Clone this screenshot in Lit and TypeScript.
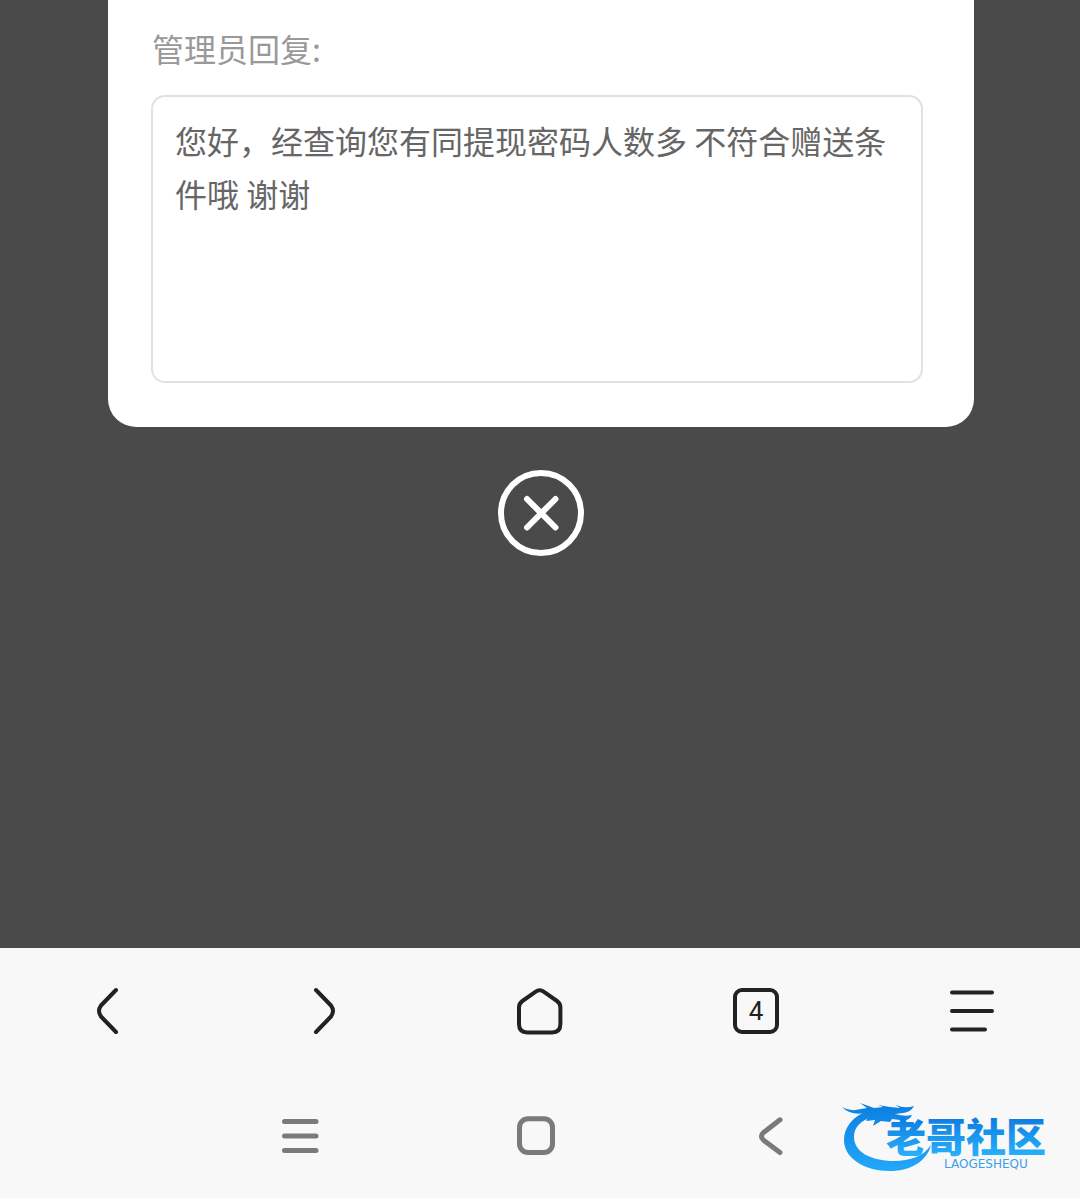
import { LitElement, html, css, svg } from "lit";
import { customElement, property } from "lit/decorators.js";

const icons = {
  back: svg`<path d="M32 3 17 18.5Q13 24 17 29.5L32 45" />`,
  forward: svg`<path d="M16 3 31 18.5Q35 24 31 29.5L16 45" />`,
  home: svg`<path d="M19.4 4.8Q23.7 1.6 28 4.8L41 14Q44.4 16.4 44.4 20.5V37Q44.4 45.4 36 45.4H11.4Q3 45.4 3 37V20.5Q3 16.4 6.4 14Z" />`,
  menu: svg`<path d="M4 5.5H44M4 24H44M4 42.5H37" />`,
  recents: svg`<path d="M8.5 9.5H40M8.5 24H40M8.5 38.5H40" />`,
  overview: svg`<rect x="7.5" y="6.8" width="33" height="33.6" rx="8.5" />`,
  systemBack: svg`<path d="M32 7.8 15.6 20.4Q11.2 24.2 15.6 28.2L32 40.6" />`,
};

@customElement("site-logo")
class SiteLogo extends LitElement {
  static styles = css`
    :host {
      display: block;
    }
    svg {
      display: block;
    }
    .name {
      font: 900 40px "Noto Sans CJK SC", sans-serif;
    }
    .latin {
      font: 12px "DejaVu Sans", sans-serif;
    }
  `;

  render() {
    return html`
      <svg width="228" height="80" viewBox="0 0 228 80" role="img" aria-label="老哥社区 LAOGESHEQU">
        <defs>
          <linearGradient id="ring" gradientUnits="userSpaceOnUse" x1="0" y1="8" x2="0" y2="76">
            <stop offset="0" stop-color="#0b7fe0" />
            <stop offset="1" stop-color="#22a9fb" />
          </linearGradient>
          <linearGradient id="ink" gradientUnits="userSpaceOnUse" x1="0" y1="24" x2="0" y2="60">
            <stop offset="0" stop-color="#0f80e2" />
            <stop offset="1" stop-color="#27b1fc" />
          </linearGradient>
        </defs>
        <path
          fill="url(#ring)"
          d="M29 14C13 20 4 31 4 44C4 62 24 75 50 75C71 75 87 65 91 49C84 60 70 65 54 65C31 65 14 56 14 41C14 31 21 24 33 21Z"
        />
        <path
          fill="url(#ring)"
          d="M2 11Q10 16 21 13L27 12L20 7L34 12L43 11L38 9L50 11L60 12L56 9Q65 13 74 10Q71 16 63 17L55 18Q65 21 72 19Q69 26 60 24L52 23L50 26L41 25L33 30L35 24L26 25L29 20L20 21L25 17Q11 20 2 11Z"
        />
        <text class="name" x="46" y="56" fill="url(#ink)">老哥社区</text>
        <text class="latin" x="104" y="72" fill="#3a9eeb">LAOGESHEQU</text>
      </svg>
    `;
  }
}

@customElement("line-icon")
class LineIcon extends LitElement {
  @property() name: keyof typeof icons = "back";

  static styles = css`
    :host {
      display: block;
    }
    svg {
      display: block;
      width: 48px;
      height: 48px;
      fill: none;
      stroke: currentColor;
      stroke-width: var(--icon-stroke, 4);
      stroke-linecap: round;
      stroke-linejoin: round;
    }
  `;

  render() {
    return html`<svg viewBox="0 0 48 48" aria-hidden="true">${icons[this.name]}</svg>`;
  }
}

@customElement("app-root")
class AppRoot extends LitElement {
  @property() reply = "您好，经查询您有同提现密码人数多 不符合赠送条件哦 谢谢";
  @property({ type: Number }) tabs = 4;

  static styles = css`
    :host {
      display: flex;
      flex-direction: column;
      min-height: 100vh;
      background: #4a4a4a;
      font-family: "Noto Sans CJK SC", sans-serif;
    }
    * {
      box-sizing: border-box;
    }
    button {
      display: grid;
      place-items: center;
      padding: 0;
      border: 0;
      background: none;
      color: inherit;
      font: inherit;
      cursor: pointer;
    }
    .backdrop {
      flex: 1;
      display: flex;
      flex-direction: column;
      align-items: center;
      gap: 43px;
      padding: 0 106px 0 108px;
    }
    .card {
      display: flex;
      flex-direction: column;
      gap: 29px;
      width: 100%;
      padding: 30px 51px 44px 43px;
      border-radius: 0 0 28px 28px;
      background: #fff;
    }
    .label {
      padding-left: 1px;
      color: #999;
      font-size: 32px;
      line-height: 36px;
    }
    .reply {
      display: block;
      width: 100%;
      height: 288px;
      margin: 0;
      padding: 17px 22px;
      border: 2px solid #e1e1e1;
      border-radius: 14px;
      outline: 0;
      resize: none;
      overflow: hidden;
      background: #fff;
      color: #666;
      font-family: inherit;
      font-size: 32px;
      line-height: 53px;
    }
    .close svg {
      display: block;
      width: 86px;
      height: 86px;
      fill: none;
      stroke: #fff;
      stroke-width: 6;
      stroke-linecap: round;
    }
    .dock {
      position: relative;
      background: #f8f8f8;
    }
    .toolbar {
      display: grid;
      grid-template-columns: repeat(5, 1fr);
      height: 126px;
      color: #222;
    }
    .count {
      display: grid;
      place-items: center;
      width: 46px;
      height: 46px;
      border: 4px solid #222;
      border-radius: 9px;
      font-family: Roboto, sans-serif;
      font-size: 26px;
      line-height: 38px;
    }
    .system {
      display: grid;
      grid-template-columns: 182fr 236fr 236fr 236fr 190fr;
      height: 124px;
      color: #7a7a7a;
      --icon-stroke: 5;
    }
    .system button:first-child {
      grid-column: 2;
    }
    .logo {
      position: absolute;
      right: 12px;
      bottom: 22px;
    }
  `;

  render() {
    return html`
      <main class="backdrop">
        <section class="card">
          <label class="label" for="reply">管理员回复:</label>
          <textarea class="reply" id="reply" readonly .value=${this.reply}></textarea>
        </section>
        <button class="close" aria-label="关闭">
          <svg viewBox="0 0 86 86" aria-hidden="true">
            <circle cx="43" cy="43" r="40" />
            <path d="M29 29 57.5 57.5M57.5 29 29 57.5" />
          </svg>
        </button>
      </main>
      <footer class="dock">
        <nav class="toolbar">
          <button aria-label="后退"><line-icon name="back"></line-icon></button>
          <button aria-label="前进"><line-icon name="forward"></line-icon></button>
          <button aria-label="主页"><line-icon name="home"></line-icon></button>
          <button aria-label="标签页"><span class="count">${this.tabs}</span></button>
          <button aria-label="菜单"><line-icon name="menu"></line-icon></button>
        </nav>
        <nav class="system">
          <button aria-label="最近任务"><line-icon name="recents"></line-icon></button>
          <button aria-label="桌面"><line-icon name="overview"></line-icon></button>
          <button aria-label="返回"><line-icon name="systemBack"></line-icon></button>
        </nav>
        <site-logo class="logo"></site-logo>
      </footer>
    `;
  }
}
